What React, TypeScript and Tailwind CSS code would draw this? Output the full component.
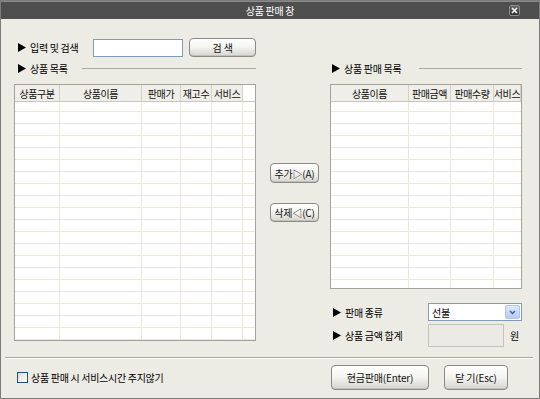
import React from 'react';

const font = { fontFamily: '"Noto Sans CJK KR", "Noto Sans", sans-serif' };

const Tri = () => (
  <svg width="8" height="9" viewBox="0 0 8 9" className="shrink-0">
    <polygon points="0,0 8,4.5 0,9" fill="#000" />
  </svg>
);

const leftCols = [
  { label: '상품구분', w: 'w-[45px]' },
  { label: '상품이름', w: 'w-[82px]' },
  { label: '판매가', w: 'w-[39px]' },
  { label: '재고수', w: 'w-[31px]' },
  { label: '서비스', w: 'w-[31px]' },
  { label: '', w: 'flex-1' },
];

const rightCols = [
  { label: '상품이름', w: 'w-[78px]' },
  { label: '판매금액', w: 'w-[42px]' },
  { label: '판매수량', w: 'w-[43px]' },
  { label: '서비스', w: 'flex-1' },
];

function Grid({ cols, rows, h }: { cols: { label: string; w: string }[]; rows: number; h: string }) {
  return (
    <div className={`${h} border border-[#a3a29c] bg-white overflow-hidden`}>
      <div className="flex h-[17px] border-b border-[#c9c7bd]">
        {cols.map((c, i) => (
          <div
            key={i}
            className={`${c.w} shrink-0 min-w-0 flex items-center justify-center whitespace-nowrap overflow-hidden border-r border-[#d4d2c8] text-[10px] tracking-[-0.4px] text-[#111] ${
              c.label ? 'bg-[#efeee8]' : 'bg-white border-r-0'
            }`}
          >
            {c.label}
          </div>
        ))}
      </div>
      {Array.from({ length: rows }).map((_, r) => (
        <div key={r} className={`flex border-b border-[#ebe9d2] ${r === 0 ? 'h-[10px]' : 'h-[12px]'}`}>
          {cols.map((c, i) => (
            <div
              key={i}
              className={`${c.w} shrink-0 ${i < cols.length - 1 ? 'border-r border-[#ebe9d2]' : ''}`}
            />
          ))}
        </div>
      ))}
    </div>
  );
}

const btn =
  'flex items-center justify-center whitespace-nowrap rounded-[4px] border border-[#8a8a86] bg-gradient-to-b from-white via-[#f3f3ef] to-[#d6d5cf] text-[10px] tracking-[-0.2px] text-[#111] shadow-[inset_0_-1px_0_#c2c1ba]';

export default function App() {
  return (
    <div className="w-[540px] h-[399px] bg-[#ecebe4] border border-[#7c7c7c] flex flex-col text-[10px] tracking-[-0.3px] text-black whitespace-nowrap" style={font}>
      {/* Title bar */}
      <div className="relative h-[18px] shrink-0 bg-[#4e4e4e] border-t border-[#8c8c8c] flex items-center justify-center">
        <span className="text-white text-[10px]">상품 판매 창</span>
        <div className="absolute right-[19px] top-[3px] w-[11px] h-[11px] rounded-[2px] bg-gradient-to-b from-[#6a6a6a] to-[#2f2f2f] border border-[#8a8a8a] flex items-center justify-center">
          <svg width="7" height="7" viewBox="0 0 7 7">
            <path d="M1 1 L6 6 M6 1 L1 6" stroke="#fff" strokeWidth="1.6" />
          </svg>
        </div>
      </div>

      {/* Main */}
      <div className="flex h-[332px] shrink-0 pl-[13px]">
        {/* Left */}
        <div className="w-[242px] flex flex-col">
          <div className="mt-[19px] h-[19px] flex items-center">
            <div className="w-[79px] pl-[4px] flex items-center gap-[4px]">
              <Tri />
              <span>입력 및 검색</span>
            </div>
            <div className="w-[91px] h-[18px] bg-white border border-[#7f9db9]" />
            <div className={`${btn} ml-[6px] w-[67px] h-[19px]`}>검 색</div>
          </div>
          <div className="mt-[5px] h-[12px] flex items-center pl-[4px] gap-[4px]">
            <Tri />
            <span>상품 목록</span>
            <div className="flex-1 ml-[10px] h-px bg-[#a8a7a0]" />
          </div>
          <div className="mt-[10px]">
            <Grid cols={leftCols} rows={20} h="h-[257px]" />
          </div>
        </div>

        {/* Middle */}
        <div className="w-[74px] flex flex-col pl-[14px]">
          <div className={`${btn} mt-[144px] w-[49px] h-[20px]`}>추가▷(A)</div>
          <div className={`${btn} mt-[20px] w-[49px] h-[19px]`}>삭제◁(C)</div>
        </div>

        {/* Right */}
        <div className="w-[192px] flex flex-col">
          <div className="mt-[43px] h-[12px] flex items-center pl-[2px] gap-[4px]">
            <Tri />
            <span>상품 판매 목록</span>
            <div className="flex-1 ml-[14px] h-px bg-[#a8a7a0]" />
          </div>
          <div className="mt-[10px]">
            <Grid cols={rightCols} rows={17} h="h-[205px]" />
          </div>
          <div className="mt-[14px] h-[18px] flex items-center">
            <div className="w-[98px] pl-[3px] flex items-center gap-[4px]">
              <Tri />
              <span>판매 종류</span>
            </div>
            <div className="w-[94px] h-[18px] bg-white border border-[#7f9db9] flex items-center">
              <span className="flex-1 pl-[3px]">선불</span>
              <div className="w-[15px] h-[14px] mr-[1px] rounded-[2px] bg-gradient-to-b from-[#dfe8fd] to-[#b7cbf5] border border-[#b0c4ef] flex items-center justify-center">
                <svg width="7" height="5" viewBox="0 0 7 5">
                  <path d="M1 1 L3.5 3.5 L6 1" stroke="#4d6185" strokeWidth="1.5" fill="none" />
                </svg>
              </div>
            </div>
          </div>
          <div className="mt-[3px] h-[23px] flex items-center">
            <div className="w-[98px] pl-[3px] flex items-center gap-[4px]">
              <Tri />
              <span>상품 금액 합계</span>
            </div>
            <div className="w-[76px] h-[23px] bg-[#ebeae4] border border-[#c3c2bb]" />
            <span className="ml-[6px]">원</span>
          </div>
        </div>
      </div>

      {/* Separator */}
      <div className="mt-[6px] mx-[4px] mr-[6px] h-px bg-[#a8a7a0] border-b border-white box-content" />

      {/* Bottom */}
      <div className="mt-[6px] h-[25px] flex items-center pl-[16px]">
        <div className="w-[11px] h-[11px] border border-[#1c5180] bg-gradient-to-br from-[#dcdcd7] to-white" />
        <span className="ml-[3px]">상품 판매 시 서비스시간 주지않기</span>
        <div className="flex-1" />
        <div className={`${btn} w-[98px] h-[25px]`}>현금판매(Enter)</div>
        <div className={`${btn} ml-[15px] w-[64px] h-[25px] mr-[31px]`}>닫 기(Esc)</div>
      </div>
    </div>
  );
}
